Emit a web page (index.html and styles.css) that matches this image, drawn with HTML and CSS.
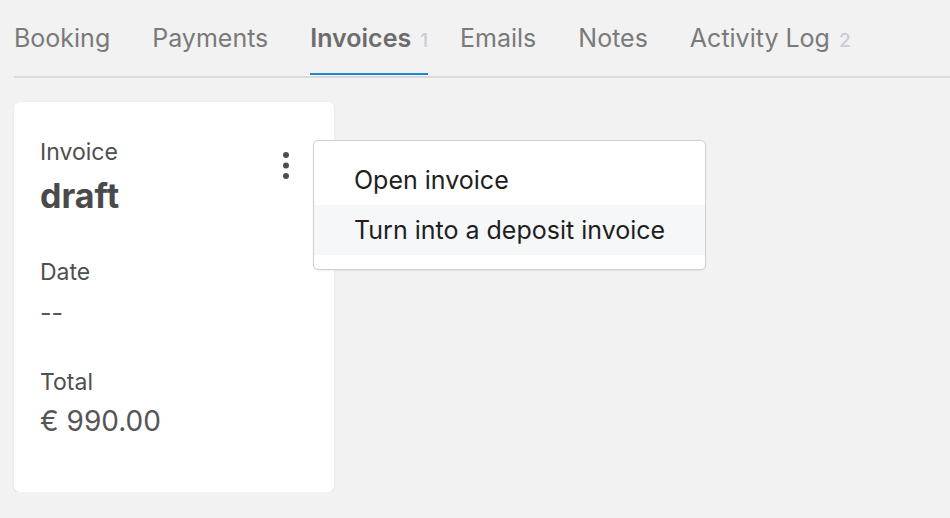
FILE: index.html
```html
<!DOCTYPE html>
<html>
<head>
<meta charset="utf-8">
<link rel="stylesheet" href="styles.css">
</head>
<body>
<div class="page">
  <nav class="tabs">
    <div class="tab">Booking</div>
    <div class="tab">Payments</div>
    <div class="tab active has-count">Invoices<span class="count">1</span></div>
    <div class="tab">Emails</div>
    <div class="tab">Notes</div>
    <div class="tab has-count">Activity Log<span class="count">2</span></div>
  </nav>
  <div class="content">
    <div class="card">
      <div class="card-head">
        <div>
          <div class="label">Invoice</div>
          <div class="status">draft</div>
        </div>
        <button class="kebab" aria-label="More">
          <svg width="8" height="28" viewBox="0 0 8 28"><circle cx="4" cy="4" r="3" fill="#4d4d4d"/><circle cx="4" cy="14.5" r="3" fill="#4d4d4d"/><circle cx="4" cy="25" r="3" fill="#4d4d4d"/></svg>
        </button>
      </div>
      <div class="field">
        <div class="label">Date</div>
        <div class="value">--</div>
      </div>
      <div class="field">
        <div class="label">Total</div>
        <div class="value amount">€ 990.00</div>
      </div>
    </div>
    <div class="menu">
      <div class="menu-item">Open invoice</div>
      <div class="menu-item hover">Turn into a deposit invoice</div>
    </div>
  </div>
</div>
</body>
</html>
```
FILE: styles.css
```css
html, body {
  margin: 0;
  padding: 0;
  background: #f2f2f2;
  font-family: Inter, "Noto Sans", "Liberation Sans", sans-serif;
}
.page {
  padding-left: 14px;
}
.tabs {
  display: flex;
  gap: 42px;
  border-bottom: 2px solid #dadada;
  height: 78px;
  box-sizing: border-box;
  align-items: flex-end;
}
.tab {
  font-size: 25px;
  color: #7a7a7a;
  line-height: 30px;
  height: 30px;
  padding-bottom: 20px;
  margin-bottom: 1px;
  border-bottom: 2px solid transparent;
  white-space: nowrap;
}
.tab.has-count {
  margin-right: -10px;
}
.tab.active {
  font-weight: 600;
  color: #6c6c6c;
  border-bottom-color: #1f87cf;
}
.count {
  font-size: 19px;
  line-height: 1;
  font-weight: 500;
  color: #c9ccd4;
  margin-left: 9px;
}
.content {
  position: relative;
  padding-top: 24px;
}
.card {
  width: 320px;
  height: 390px;
  box-sizing: border-box;
  background: #fff;
  border-radius: 6px;
  box-shadow: 0 1px 3px rgba(0,0,0,0.08);
  padding: 36px 26px 0 26px;
  color: #4d4d4d;
}
.card-head {
  display: flex;
  justify-content: space-between;
  align-items: flex-start;
}
.kebab {
  background: none;
  border: 0;
  padding: 0;
  margin: 13px 18px 0 0;
  line-height: 0;
}
.label {
  font-size: 23px;
  line-height: 28px;
  color: #4f4f4f;
}
.status {
  font-size: 34px;
  font-weight: 700;
  line-height: 40px;
  margin-top: 10px;
  color: #4a4a4a;
}
.field {
  margin-top: 42px;
}
.field + .field {
  margin-top: 40px;
}
.value {
  font-size: 25px;
  line-height: 30px;
  margin-top: 12px;
  color: #555;
}
.amount {
  font-size: 28px;
  line-height: 34px;
  margin-top: 8px;
}
.menu {
  position: absolute;
  left: 299px;
  top: 62px;
  width: 393px;
  box-sizing: border-box;
  background: #fff;
  border: 1px solid #cfcfcf;
  border-radius: 5px;
  box-shadow: 0 1px 2px rgba(0,0,0,0.06);
  padding: 14px 0;
}
.menu-item {
  font-size: 25px;
  line-height: 50px;
  padding-left: 40px;
  color: #1e1e1e;
}
.menu-item.hover {
  background: #f6f7f9;
}
```
